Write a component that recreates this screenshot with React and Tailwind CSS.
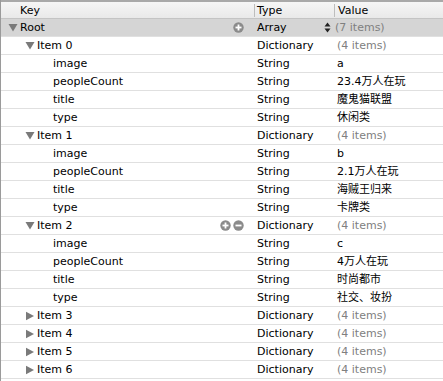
import React from "react";

const Down = () => (
  <svg width="10" height="9" viewBox="0 0 10 9" className="shrink-0">
    <polygon points="0.5,1 9.5,1 5,8.5" fill="#7a7a7a" />
  </svg>
);
const Right = () => (
  <svg width="10" height="10" viewBox="0 0 10 10" className="shrink-0">
    <polygon points="1,0.8 9,5 1,9.2" fill="#7a7a7a" />
  </svg>
);
const Plus = () => (
  <svg width="11" height="11" viewBox="0 0 11 11">
    <circle cx="5.5" cy="5.5" r="5.2" fill="#8b8b8b" />
    <rect x="2.5" y="4.6" width="6" height="1.8" fill="#fff" />
    <rect x="4.6" y="2.5" width="1.8" height="6" fill="#fff" />
  </svg>
);
const Minus = () => (
  <svg width="11" height="11" viewBox="0 0 11 11">
    <circle cx="5.5" cy="5.5" r="5.2" fill="#8b8b8b" />
    <rect x="2.5" y="4.6" width="6" height="1.8" fill="#fff" />
  </svg>
);
const Stepper = () => (
  <svg width="7" height="11" viewBox="0 0 7 11">
    <polygon points="3.5,0.5 6.5,4.5 0.5,4.5" fill="#222" />
    <polygon points="0.5,6.5 6.5,6.5 3.5,10.5" fill="#222" />
  </svg>
);

const rows = [
  { level: 0, key: "Root", type: "Array", value: "(7 items)", gray: true, tri: "down", sel: true },
  { level: 1, key: "Item 0", type: "Dictionary", value: "(4 items)", gray: true, tri: "down" },
  { level: 2, key: "image", type: "String", value: "a" },
  { level: 2, key: "peopleCount", type: "String", value: "23.4万人在玩" },
  { level: 2, key: "title", type: "String", value: "魔鬼猫联盟" },
  { level: 2, key: "type", type: "String", value: "休闲类" },
  { level: 1, key: "Item 1", type: "Dictionary", value: "(4 items)", gray: true, tri: "down" },
  { level: 2, key: "image", type: "String", value: "b" },
  { level: 2, key: "peopleCount", type: "String", value: "2.1万人在玩" },
  { level: 2, key: "title", type: "String", value: "海贼王归来" },
  { level: 2, key: "type", type: "String", value: "卡牌类" },
  { level: 1, key: "Item 2", type: "Dictionary", value: "(4 items)", gray: true, tri: "down", pm: true },
  { level: 2, key: "image", type: "String", value: "c" },
  { level: 2, key: "peopleCount", type: "String", value: "4万人在玩" },
  { level: 2, key: "title", type: "String", value: "时尚都市" },
  { level: 2, key: "type", type: "String", value: "社交、妆扮" },
  { level: 1, key: "Item 3", type: "Dictionary", value: "(4 items)", gray: true, tri: "right" },
  { level: 1, key: "Item 4", type: "Dictionary", value: "(4 items)", gray: true, tri: "right" },
  { level: 1, key: "Item 5", type: "Dictionary", value: "(4 items)", gray: true, tri: "right" },
  { level: 1, key: "Item 6", type: "Dictionary", value: "(4 items)", gray: true, tri: "right" },
];

const padL = { 0: "pl-[7px]", 1: "pl-[24px]", 2: "pl-[52px]" };

export default function App() {
  return (
    <div
      className="w-[443px] h-[381px] bg-white overflow-hidden border-l border-[#9a9a9a] text-[11px] text-black leading-none"
      style={{ fontFamily: '"DejaVu Sans", "Noto Sans CJK SC", sans-serif' }}
    >
      <div className="h-[19px] flex items-center border-t-2 border-[#a9a9a9] border-b border-b-[#c4c4c4] bg-gradient-to-b from-[#f6f6f6] to-[#e9e9e9]">
        <div className="w-[253px] pl-[19px] pt-[1px]">Key</div>
        <div className="w-[80px] h-[13px] border-l border-[#bdbdbd] pl-[2px] flex items-center">Type</div>
        <div className="flex-1 h-[13px] border-l border-[#bdbdbd] pl-[3px] flex items-center">Value</div>
      </div>
      {rows.map((r, i) => (
        <div
          key={i}
          className={`h-[18px] flex items-center border-b border-[#e0e0e0] ${r.sel ? "bg-[#d5d5d5]" : ""}`}
        >
          <div className={`w-[253px] flex items-center ${padL[r.level]}`}>
            {r.tri === "down" && <Down />}
            {r.tri === "right" && <Right />}
            <span className={r.tri ? "ml-[2px]" : ""}>{r.key}</span>
            <div className="flex-1" />
            {r.sel && (
              <div className="mr-[10px] flex"><Plus /></div>
            )}
            {r.pm && (
              <div className="mr-[10px] flex gap-[2px]"><Plus /><Minus /></div>
            )}
          </div>
          <div className="w-[80px] pl-[3px] flex items-center">{r.type}</div>
          <div className={`flex-1 flex items-center ${r.gray ? "text-[#808080]" : ""}`}>
            {r.sel && <span className="-ml-[10px] mr-[4px] flex"><Stepper /></span>}
            <span className={r.sel ? "" : "pl-[3px]"}>{r.value}</span>
          </div>
        </div>
      ))}
    </div>
  );
}
